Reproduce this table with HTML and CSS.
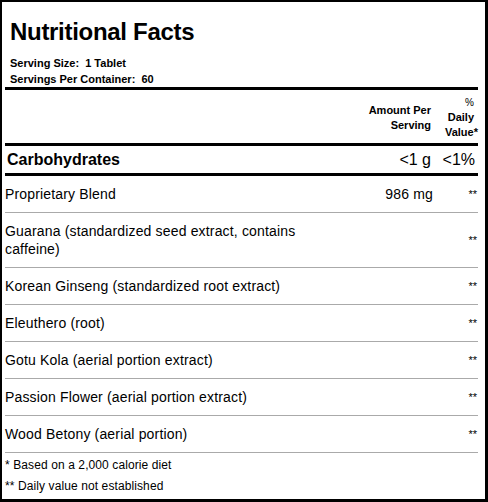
FILE: index.html
```html
<!DOCTYPE html>
<html>
<head>
<meta charset="utf-8">
<link rel="stylesheet" href="styles.css">
</head>
<body>
<div class="facts">
  <div class="head">
    <h1 class="title">Nutritional Facts</h1>
    <p class="serv">Serving Size:&nbsp; 1 Tablet</p>
    <p class="serv">Servings Per Container:&nbsp; 60</p>
  </div>
  <table class="tbl">
    <colgroup><col><col class="c-amt"><col class="c-dv"></colgroup>
    <thead>
      <tr class="hrow">
        <th></th>
        <th class="amt">Amount Per<br>Serving</th>
        <th class="dv"><span class="pc">%</span><span class="dl">Daily</span><span class="vl">Value*</span></th>
      </tr>
    </thead>
    <tbody class="major">
      <tr>
        <td class="name">Carbohydrates</td>
        <td class="amt">&lt;1 g</td>
        <td class="dv">&lt;1%</td>
      </tr>
    </tbody>
    <tbody class="rows">
      <tr><td class="name">Proprietary Blend</td><td class="amt">986 mg</td><td class="dv">**</td></tr>
      <tr><td class="name">Guarana (standardized seed extract, contains caffeine)</td><td class="amt"></td><td class="dv">**</td></tr>
      <tr><td class="name">Korean Ginseng (standardized root extract)</td><td class="amt"></td><td class="dv">**</td></tr>
      <tr><td class="name">Eleuthero (root)</td><td class="amt"></td><td class="dv">**</td></tr>
      <tr><td class="name">Gotu Kola (aerial portion extract)</td><td class="amt"></td><td class="dv">**</td></tr>
      <tr><td class="name">Passion Flower (aerial portion extract)</td><td class="amt"></td><td class="dv">**</td></tr>
      <tr><td class="name">Wood Betony (aerial portion)</td><td class="amt"></td><td class="dv">**</td></tr>
    </tbody>
  </table>
  <div class="notes">
    <p class="note">* Based on a 2,000 calorie diet</p>
    <p class="note">** Daily value not established</p>
  </div>
</div>
</body>
</html>
```
FILE: styles.css
```css
html, body {
  margin: 0;
  padding: 0;
  background: #fff;
}
body {
  font-family: "Liberation Sans", Arial, sans-serif;
  color: #000;
}
.facts {
  box-sizing: border-box;
  width: 488px;
  height: 502px;
  border-style: solid;
  border-color: #000;
  border-width: 2px 3px 3px 2px;
  padding: 0 7px 0 3px;
}
.head {
  padding: 16px 0 0 5px;
  border-bottom: 3px solid #000;
}
.title {
  margin: 0 0 9px 0;
  font-size: 24px;
  line-height: 28px;
  font-weight: bold;
  letter-spacing: -0.3px;
}
.serv {
  margin: 0;
  font-size: 11px;
  line-height: 16px;
  font-weight: bold;
}
.tbl {
  width: 100%;
  border-collapse: collapse;
}
.c-amt { width: 100px; }
.c-dv { width: 45px; }
.tbl th, .tbl td {
  padding: 0;
}
.hrow th {
  font-size: 11px;
  font-weight: bold;
  line-height: 15px;
  text-align: right;
  vertical-align: middle;
  padding: 5px 0 3px 0;
  border-bottom: 3px solid #000;
}
.hrow th.amt {
  padding-right: 2px;
}
.dv span {
  display: block;
}
.pc, .dl {
  margin-right: 4px;
}
.pc {
  font-weight: normal;
  font-size: 10px;
}
.major td {
  border-bottom: 3px solid #000;
  padding: 5px 0 5px 0;
  font-size: 16px;
  line-height: 17px;
  text-align: right;
}
.major td.name {
  text-align: left;
  font-weight: bold;
  font-size: 16px;
  padding-left: 2px;
}
.major td.amt {
  padding-right: 2px;
}
.major td.dv {
  padding-right: 3px;
}
.rows td {
  border-bottom: 1px solid #aaa;
  padding: 9px 0;
  font-size: 14px;
  line-height: 18px;
  letter-spacing: 0.16px;
  vertical-align: middle;
}
.rows td.name {
  text-align: left;
  padding-right: 20px;
}
.rows td.amt {
  text-align: right;
  padding-right: 0;
}
.rows td.dv {
  text-align: right;
  font-size: 11px;
  letter-spacing: 0;
  color: #000;
  padding-right: 1px;
}
.notes {
  padding-top: 2px;
}
.note {
  margin: 0;
  font-size: 12px;
  line-height: 21px;
  letter-spacing: 0.1px;
}
```
